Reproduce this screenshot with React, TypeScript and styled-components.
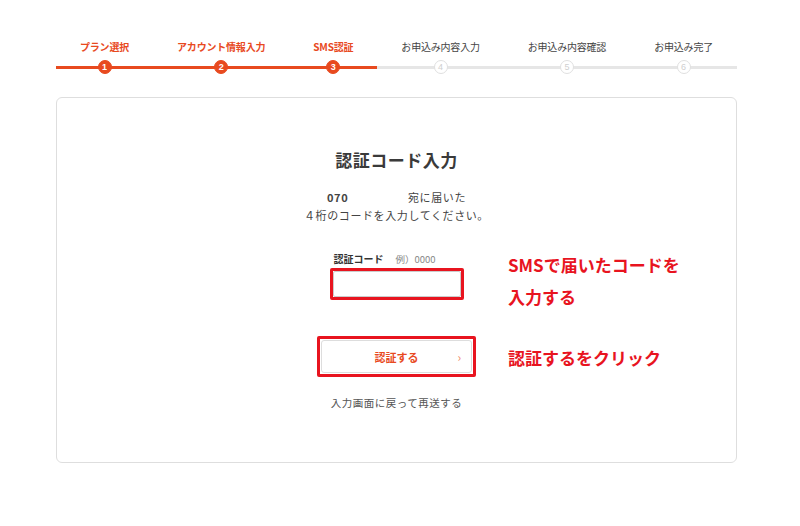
import React from 'react';
import styled, { createGlobalStyle } from 'styled-components';

const ORANGE = '#e84a1f';
const MARK = '#e8141f';

const GlobalStyle = createGlobalStyle`
    * {
        box-sizing: border-box;
    }
    body {
        margin: 0;
        background: #fff;
        font-family: 'Noto Sans CJK JP', 'Noto Sans', sans-serif;
        color: #333;
    }
`;

const Page = styled.div`
    width: 800px;
    padding: 39px 63px 0 56px;
`;

const Stepper = styled.ol`
    display: flex;
    list-style: none;
    margin: 0;
    padding: 0;
    width: 681px;
`;

type StepProps = { $done: boolean };

const Step = styled.li`
    flex: 1 1 auto;
    display: flex;
    flex-direction: column;
    align-items: center;
    gap: 5px;
`;

const StepLabel = styled.span<StepProps>`
    font-size: 10px;
    line-height: 16px;
    white-space: nowrap;
    letter-spacing: -0.2px;
    font-weight: ${(p) => (p.$done ? 700 : 400)};
    color: ${(p) => (p.$done ? ORANGE : '#444')};
`;

const Track = styled.div<StepProps>`
    position: relative;
    width: 100%;
    height: 14px;
    display: flex;
    align-items: center;
    justify-content: center;

    &::before {
        content: '';
        position: absolute;
        left: 0;
        right: 0;
        top: 6px;
        height: 3px;
        background: ${(p) => (p.$done ? ORANGE : '#e6e6e6')};
    }
`;

const Dot = styled.span<StepProps>`
    position: relative;
    width: 14px;
    height: 14px;
    border-radius: 50%;
    display: flex;
    align-items: center;
    justify-content: center;
    font-family: 'Liberation Sans', Arial, sans-serif;
    font-size: 9px;
    font-weight: ${(p) => (p.$done ? 700 : 400)};
    background: ${(p) => (p.$done ? ORANGE : '#fff')};
    border: 1px solid ${(p) => (p.$done ? ORANGE : '#e0e0e0')};
    color: ${(p) => (p.$done ? '#fff' : '#cfcfcf')};
`;

const Card = styled.section`
    position: relative;
    margin-top: 23px;
    width: 681px;
    height: 366px;
    border: 1px solid #dedede;
    border-radius: 6px;
    padding-top: 50px;
    display: flex;
    flex-direction: column;
    align-items: center;
`;

const Title = styled.h1`
    margin: 0;
    font-size: 17px;
    line-height: 24px;
    font-weight: 700;
    color: #3a3a3a;
    letter-spacing: 0.5px;
`;

const Lead = styled.p`
    margin: 16px 0 0;
    font-size: 11px;
    line-height: 18px;
    color: #444;
    text-align: center;
    letter-spacing: 0.6px;
`;

const Phone = styled.b`
    display: inline-block;
    width: 81px;
    text-align: left;
`;

const Form = styled.div`
    margin-top: 27px;
    display: flex;
    flex-direction: column;
    align-items: center;
`;

const LabelRow = styled.div`
    width: 130px;
    display: flex;
    align-items: baseline;
    gap: 12px;
    padding-left: 2px;
    line-height: 16px;
`;

const FieldLabel = styled.label`
    font-size: 10px;
    font-weight: 700;
    color: #333;
`;

const Hint = styled.span`
    font-size: 9.5px;
    color: #888;
`;

const Marked = styled.div<{ $pad: number; $gap: number }>`
    position: relative;
    margin-top: ${(p) => p.$gap}px;

    &::after {
        content: '';
        position: absolute;
        inset: ${(p) => -p.$pad}px;
        border: 3px solid ${MARK};
        border-radius: 2px;
        pointer-events: none;
    }
`;

const CodeInput = styled.input`
    display: block;
    width: 128px;
    height: 26px;
    border: 1px solid #ccc;
    border-radius: 2px;
    font-size: 12px;
    padding: 0 6px;
`;

const Button = styled.button`
    width: 151px;
    height: 33px;
    border: 1px solid #ddd;
    border-radius: 3px;
    background: #fff;
    position: relative;
    display: flex;
    align-items: center;
    justify-content: center;
    font-family: inherit;
    font-size: 11px;
    font-weight: 700;
    color: ${ORANGE};
    cursor: pointer;
`;

const Chevron = styled.span`
    position: absolute;
    right: 10px;
    top: 50%;
    transform: translateY(-55%);
    font-size: 12px;
    font-weight: 400;
    color: #f08a6a;
`;

const Resend = styled.a`
    margin-top: 22px;
    font-size: 10.5px;
    line-height: 16px;
    color: #555;
    letter-spacing: 0.5px;
    text-decoration: none;
`;

const Note = styled.p<{ $top: number }>`
    position: absolute;
    left: 451px;
    top: ${(p) => p.$top}px;
    margin: 0;
    font-size: 17px;
    line-height: 32px;
    font-weight: 700;
    color: ${MARK};
`;

const steps = [
    'プラン選択',
    'アカウント情報入力',
    'SMS認証',
    'お申込み内容入力',
    'お申込み内容確認',
    'お申込み完了',
];
const current = 3;

export default function App(): JSX.Element {
    return (
        <>
            <GlobalStyle />
            <Page>
                <Stepper>
                    {steps.map((label, i) => {
                        const done = i < current;
                        return (
                            <Step key={label}>
                                <StepLabel $done={done}>{label}</StepLabel>
                                <Track $done={done}>
                                    <Dot $done={done}>{i + 1}</Dot>
                                </Track>
                            </Step>
                        );
                    })}
                </Stepper>

                <Card>
                    <Title>認証コード入力</Title>
                    <Lead>
                        <Phone>070</Phone>宛に届いた
                        <br />４桁のコードを入力してください。
                    </Lead>

                    <Form>
                        <LabelRow>
                            <FieldLabel htmlFor='code'>認証コード</FieldLabel>
                            <Hint>例）0000</Hint>
                        </LabelRow>
                        <Marked $pad={3} $gap={4}>
                            <CodeInput id='code' />
                        </Marked>
                        <Marked $pad={4} $gap={43}>
                            <Button>
                                認証する
                                <Chevron>›</Chevron>
                            </Button>
                        </Marked>
                    </Form>
                    <Resend href='#'>入力画面に戻って再送する</Resend>

                    <Note $top={151}>
                        SMSで届いたコードを
                        <br />
                        入力する
                    </Note>
                    <Note $top={244}>認証するをクリック</Note>
                </Card>
            </Page>
        </>
    );
}
